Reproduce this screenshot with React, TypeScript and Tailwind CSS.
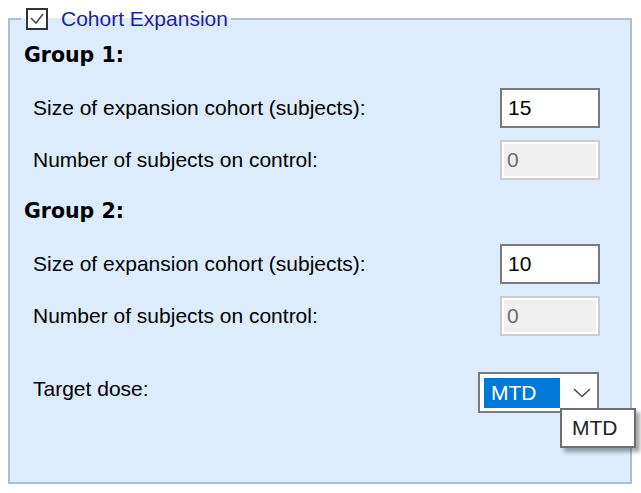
import React from 'react';

const labelCls = "pl-[23px] text-[21px] leading-[24px] text-black";

const Field = ({ value, disabled }: { value: string; disabled?: boolean }) => (
  <div
    className={
      disabled
        ? "w-[100px] h-[40px] border-2 border-[#cccccc] bg-[#f0f0f0] shadow-[inset_0_0_0_2px_#ffffff] flex items-center pl-[5px] text-[#6d6d6d]"
        : "w-[100px] h-[40px] border-2 border-[#7a7a7a] bg-white flex items-center pl-[6px] text-black"
    }
  >
    {value}
  </div>
);

const App = () => {
  const groups = [
    { title: 'Group 1:', size: '15', control: '0' },
    { title: 'Group 2:', size: '10', control: '0' }
  ];

  return (
    <div className="w-[641px] h-[493px] bg-white overflow-hidden font-['Liberation_Sans',Arial,sans-serif] text-[21px] leading-[24px]">
      <fieldset className="ml-[8px] mt-[7px] w-[624px] h-[477px] border-2 border-[#adbfd4] bg-[#dcecfd] p-0">
        <legend className="ml-[11px] pl-[5px] pr-[3px] h-[24px]">
          <span className="flex items-center h-[24px]">
            <span className="w-[22px] h-[22px] border-2 border-[#333333] bg-white flex items-center justify-center">
              <svg width="18" height="18" viewBox="0 0 18 18">
                <polyline points="3,8 8,13 15,4" fill="none" stroke="#4a4a4a" strokeWidth="1.6" />
              </svg>
            </span>
            <span className="ml-[13px] text-[#1f1fa3]">Cohort Expansion</span>
          </span>
        </legend>

        <div className="pr-[30px]">
          {groups.map((g, i) => (
            <div key={g.title}>
              <div className={(i === 0 ? "mt-[12px]" : "mt-[19px]") + " pl-[14px] font-['DejaVu_Sans',sans-serif] font-bold text-[20.5px] leading-[24px] text-black"}>
                {g.title}
              </div>
              <div className="mt-[21px] flex items-center justify-between">
                <span className={labelCls}>Size of expansion cohort (subjects):</span>
                <Field value={g.size} />
              </div>
              <div className="mt-[12px] flex items-center justify-between">
                <span className={labelCls}>Number of subjects on control:</span>
                <Field value={g.control} disabled />
              </div>
            </div>
          ))}

          <div className="mt-[36px] flex items-center justify-between">
            <span className={labelCls + " mb-[7px]"}>Target dose:</span>
            <div className="relative mr-[1px] w-[121px] h-[41px] border-2 border-[#7a7a7a] bg-white flex items-center p-[4px]">
              <div className="w-[76px] h-[30px] bg-[#0078d7] text-white flex items-center pl-[7px]">MTD</div>
              <svg className="ml-[13px]" width="18" height="10" viewBox="0 0 18 10">
                <polyline points="1,1 9,8.5 17,1" fill="none" stroke="#4a4a4a" strokeWidth="1.5" />
              </svg>
              <div className="absolute left-[80px] top-[34px] w-[76px] h-[40px] border-2 border-[#6f6f6f] bg-white flex items-center pl-[10px] text-[#222222] shadow-[4px_4px_4px_rgba(0,0,0,0.35)]">
                MTD
              </div>
            </div>
          </div>
        </div>
      </fieldset>
    </div>
  );
};

export default App;
